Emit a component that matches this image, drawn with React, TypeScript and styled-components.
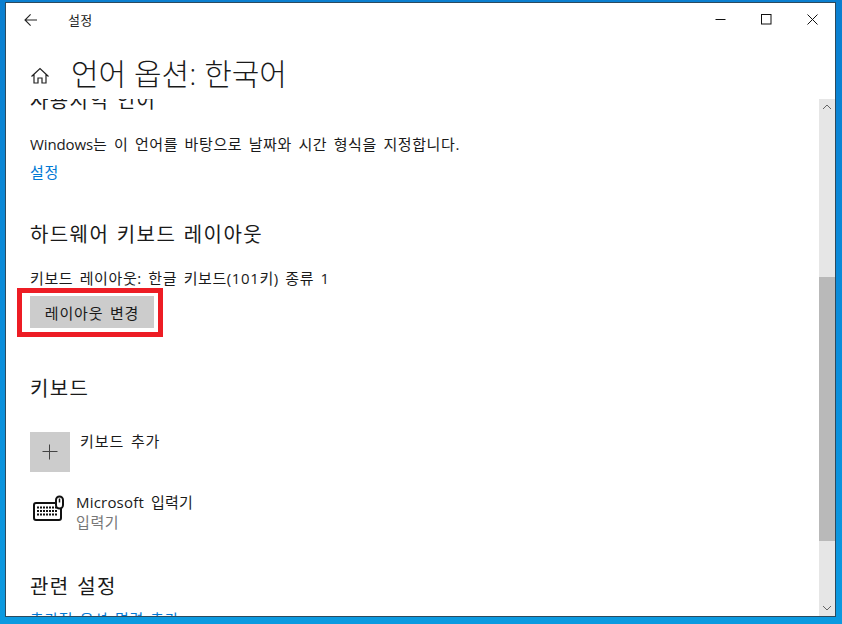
import React from "react";
import styled, { createGlobalStyle } from "styled-components";

const Global = createGlobalStyle`
  html, body { margin: 0; padding: 0; }
  body { font-family: "Open Sans", "Noto Sans CJK KR", sans-serif; }
`;

const Desktop = styled.div`
  width: 842px;
  height: 624px;
  box-sizing: border-box;
  padding: 2px 6px 7px 5px;
  background: linear-gradient(180deg, #0a7fd0 0%, #0a8fdc 60%, #0c9ae0 100%);
  overflow: hidden;
`;

const Win = styled.div`
  width: 100%;
  height: 100%;
  box-sizing: border-box;
  border: 1px solid #2c4a5e;
  background: #fff;
  display: flex;
  flex-direction: column;
`;

const TitleBar = styled.div`
  height: 33px;
  display: flex;
  align-items: center;
  padding-left: 18px;
  flex: none;
`;

const BackBtn = styled.div`
  width: 14px;
  height: 14px;
  display: flex;
  color: #222;
`;

const TitleText = styled.div`
  margin-left: 30px;
  font-size: 13px;
  letter-spacing: 0.3px;
  color: #222;
`;

const Controls = styled.div`
  margin-left: auto;
  display: flex;
`;

const Ctl = styled.div`
  width: 46px;
  height: 30px;
  display: flex;
  align-items: center;
  justify-content: center;
`;

const Header = styled.div`
  height: 63px;
  box-sizing: border-box;
  padding: 12px 0 0 24px;
  display: flex;
  align-items: center;
  flex: none;
`;

const Home = styled.div`
  width: 20px;
  height: 20px;
  display: flex;
  margin-top: 5px;
`;

const PageTitle = styled.h1`
  margin: 0 0 0 21px;
  font-size: 30px;
  font-weight: 300;
  color: #1a1a1a;
  line-height: 40px;
`;

const Body = styled.div`
  flex: 1;
  min-height: 0;
  display: flex;
`;

const Scroll = styled.div`
  flex: 1;
  min-width: 0;
  overflow: hidden;
`;

const Content = styled.div`
  margin-top: -12px;
  padding-left: 24px;
`;

const SectionHead = styled.h2<{ $top: number }>`
  margin: ${(p) => p.$top}px 0 0;
  font-size: 20px;
  font-weight: 400;
  line-height: 28px;
  color: #1a1a1a;
  letter-spacing: 1.4px;
  word-spacing: 1px;
`;

const Para = styled.p<{ $top: number }>`
  margin: ${(p) => p.$top}px 0 0;
  font-size: 15px;
  line-height: 20px;
  color: #1a1a1a;
  letter-spacing: 0.6px;
  word-spacing: 2px;
`;

const Latin = styled.span`
  letter-spacing: -0.1px;
`;

const LinkText = styled.a<{ $top: number }>`
  display: block;
  margin-top: ${(p) => p.$top}px;
  font-size: 15px;
  line-height: 20px;
  color: #0078d4;
  letter-spacing: 0.6px;
  word-spacing: 2px;
`;

const Highlight = styled.div`
  margin: 0 0 0 -13px;
  width: 146px;
  height: 49px;
  box-sizing: border-box;
  border: 5px solid #ed1c24;
  padding: 3px 4px 3px 8px;
`;

const Button = styled.div`
  width: 124px;
  height: 32px;
  background: #cccccc;
  display: flex;
  align-items: center;
  justify-content: center;
  font-size: 15px;
  letter-spacing: 0.8px;
  word-spacing: 2px;
  color: #1a1a1a;
`;

const AddRow = styled.div`
  margin-top: 29px;
  display: flex;
  align-items: flex-start;
`;

const AddBox = styled.div`
  width: 40px;
  height: 40px;
  background: #cccccc;
  display: flex;
  align-items: center;
  justify-content: center;
  flex: none;
`;

const AddLabel = styled.div`
  margin: -1px 0 0 10px;
  font-size: 15px;
  line-height: 20px;
  letter-spacing: 0.9px;
  word-spacing: 2px;
  color: #1a1a1a;
`;

const ImeRow = styled.div`
  margin-top: 20px;
  display: flex;
  align-items: flex-start;
`;

const ImeIcon = styled.div`
  width: 34px;
  height: 32px;
  margin-top: 3px;
  display: flex;
  flex: none;
`;

const ImeText = styled.div`
  margin-left: 12px;
  display: flex;
  flex-direction: column;
`;

const ImeName = styled.div`
  font-size: 15px;
  line-height: 20px;
  letter-spacing: 0.2px;
  word-spacing: 3px;
  color: #1a1a1a;
`;

const ImeSub = styled.div`
  font-size: 15px;
  line-height: 20px;
  letter-spacing: 0.6px;
  color: #777;
`;

const Track = styled.div`
  width: 16px;
  flex: none;
  background: #e6e6e6;
  display: flex;
  flex-direction: column;
`;

const Arrow = styled.div`
  height: 16px;
  flex: none;
  display: flex;
  align-items: center;
  justify-content: center;
`;

const Thumb = styled.div`
  margin-top: 162px;
  height: 264px;
  flex: none;
  background: #b9b9b9;
`;

const Spacer = styled.div`
  flex: 1;
`;

export default function App() {
  return (
    <Desktop>
      <Global />
      <Win>
        <TitleBar>
          <BackBtn>
            <svg width="14" height="14" viewBox="0 0 14 14" fill="none" stroke="currentColor" strokeWidth="1.1">
              <path d="M1 7h12M6.6 1.4 1 7l5.6 5.6" />
            </svg>
          </BackBtn>
          <TitleText>설정</TitleText>
          <Controls>
            <Ctl>
              <svg width="11" height="11" viewBox="0 0 11 11" fill="none" stroke="#111" strokeWidth="1">
                <path d="M0.5 5.5h10" />
              </svg>
            </Ctl>
            <Ctl>
              <svg width="11" height="11" viewBox="0 0 11 11" fill="none" stroke="#111" strokeWidth="1">
                <rect x="0.5" y="0.5" width="9.5" height="9.5" />
              </svg>
            </Ctl>
            <Ctl>
              <svg width="11" height="11" viewBox="0 0 11 11" fill="none" stroke="#111" strokeWidth="1">
                <path d="M0.5 0.5 10.5 10.5M10.5 0.5 0.5 10.5" />
              </svg>
            </Ctl>
          </Controls>
        </TitleBar>
        <Header>
          <Home>
            <svg width="20" height="20" viewBox="0 0 20 20" fill="none" stroke="#222" strokeWidth="1.2">
              <path d="M1.5 10.5 10 2.5l8.5 8M4 8.5V17h4v-5h4v5h4V8.5" />
            </svg>
          </Home>
          <PageTitle>언어 옵션: 한국어</PageTitle>
        </Header>
        <Body>
          <Scroll>
            <Content>
              <SectionHead $top={0}>사용지역 언어</SectionHead>
              <Para $top={19}>
                <Latin>Windows</Latin>는 이 언어를 바탕으로 날짜와 시간 형식을 지정합니다.
              </Para>
              <LinkText $top={8}>설정</LinkText>
              <SectionHead $top={39}>하드웨어 키보드 레이아웃</SectionHead>
              <Para $top={19}>키보드 레이아웃: 한글 키보드(101키) 종류 1</Para>
              <Highlight>
                <Button>레이아웃 변경</Button>
              </Highlight>
              <SectionHead $top={38}>키보드</SectionHead>
              <AddRow>
                <AddBox>
                  <svg width="16" height="16" viewBox="0 0 16 16" fill="none" stroke="#444" strokeWidth="1">
                    <path d="M7.5 0.5v15M0.5 7.5h15" />
                  </svg>
                </AddBox>
                <AddLabel>키보드 추가</AddLabel>
              </AddRow>
              <ImeRow>
                <ImeIcon>
                  <svg width="34" height="32" viewBox="0 0 34 32" fill="none">
                    <rect x="4" y="8" width="27" height="17" rx="2" stroke="#111" strokeWidth="2" />
                    <path d="M7 12.5h21M7 16h21M7 19.5h21" stroke="#111" strokeWidth="2" strokeDasharray="2 1" />
                    <rect x="26" y="1.5" width="7" height="12" rx="3.5" fill="#fff" stroke="#111" strokeWidth="2" />
                    <path d="M29.5 3.5v4" stroke="#111" strokeWidth="1.5" />
                  </svg>
                </ImeIcon>
                <ImeText>
                  <ImeName>Microsoft 입력기</ImeName>
                  <ImeSub>입력기</ImeSub>
                </ImeText>
              </ImeRow>
              <SectionHead $top={41}>관련 설정</SectionHead>
              <LinkText $top={8}>추가적 옵션 명령 추가</LinkText>
            </Content>
          </Scroll>
          <Track>
            <Arrow>
              <svg width="10" height="6" viewBox="0 0 10 6" fill="none" stroke="#666" strokeWidth="1">
                <path d="M1 5 5 1l4 4" />
              </svg>
            </Arrow>
            <Thumb />
            <Spacer />
            <Arrow>
              <svg width="10" height="6" viewBox="0 0 10 6" fill="none" stroke="#666" strokeWidth="1">
                <path d="M1 1l4 4 4-4" />
              </svg>
            </Arrow>
          </Track>
        </Body>
      </Win>
    </Desktop>
  );
}
